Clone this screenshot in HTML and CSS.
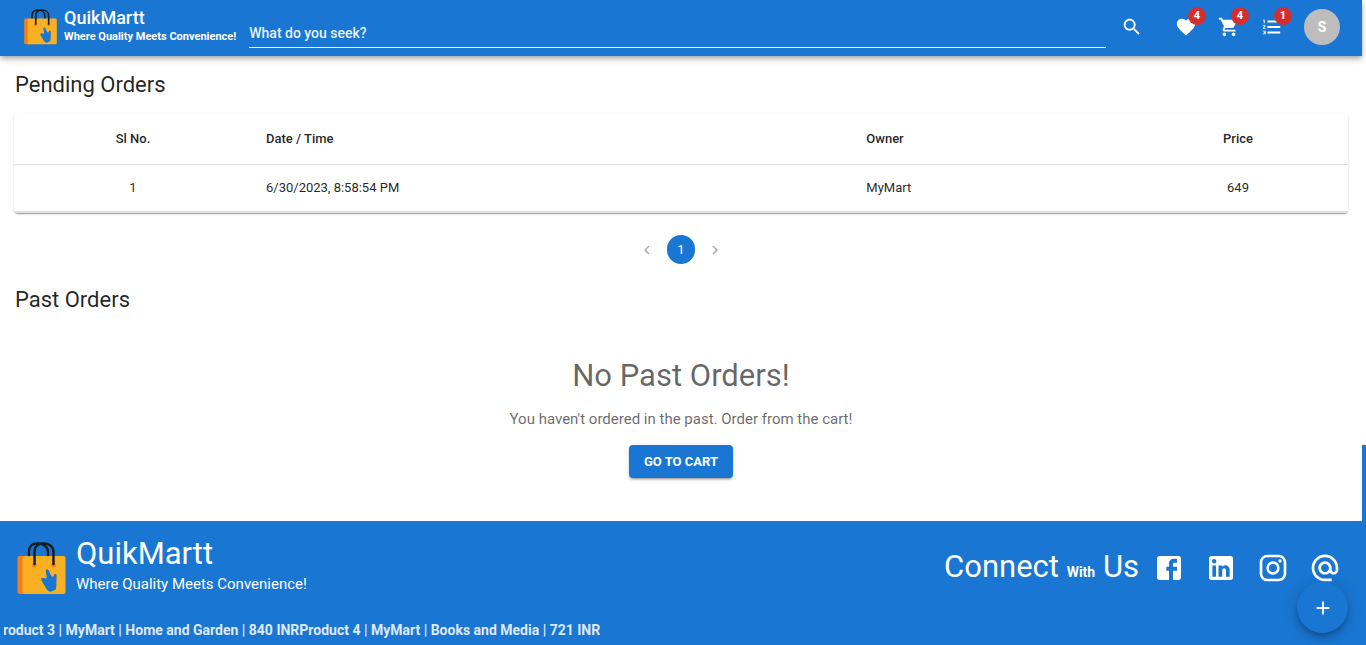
FILE: index.html
```html
<!DOCTYPE html>
<html lang="en">
<head>
<meta charset="utf-8">
<meta name="viewport" content="width=device-width, initial-scale=1">
<title>QuikMartt – Orders</title>
<link rel="stylesheet" href="styles.css">
</head>
<body>
<svg class="defs" aria-hidden="true">
  <symbol id="bag" viewBox="0 0 48 53">
    <path fill="#f57f17" d="M2 14h8v38H2a2 2 0 0 1-2-2V16a2 2 0 0 1 2-2z"/>
    <path fill="#f9b023" d="M7 14h39a2 2 0 0 1 2 2v34a2 2 0 0 1-2 2H7c-1 0-2-1-2-2V17c0-2 1-3 2-3z"/>
    <circle cx="17" cy="23" r="2.400" fill="#f57f17"/><circle cx="36" cy="23" r="2.400" fill="#f57f17"/>
    <path fill="none" stroke="#151c22" stroke-width="2.400" stroke-linecap="round" d="M11.500 13V10C11.500 4 15 1.400 20 1.400S30.500 4 30.500 10v3M17 22V10C17 4 21 1.400 26 1.400S36 4 36 10v12"/>
    <path fill="#1976d2" d="M28.200 28.500c.2-1.500 2-1.800 2.700-.6l3.200 6.600 1.500.2 1.200-2.300c.8-.9 2.300-.4 2.300.8l-.2 9.800c.1 2-.4 3-.7 4.500l-4.600 2.300c-2-.3-3.200-1.200-4.300-2.400l-5-8.300c-1.200-1.800-.6-3.600 1.400-3.200l2.600.6 1-.8z"/>
  </symbol>
</svg>

<div class="page">
  <header class="topbar">
    <a class="brand" href="#">
      <svg class="brand-logo" aria-hidden="true"><use href="#bag"/></svg>
      <span class="brand-text">
        <span class="brand-name">QuikMartt</span>
        <span class="brand-tag">Where Quality Meets Convenience!</span>
      </span>
    </a>
    <form class="search">
      <input class="search-input" type="text" placeholder="What do you seek?" aria-label="What do you seek?">
      <button class="icon-btn" type="button" aria-label="Search">
        <svg class="icon" viewBox="0 0 24 24"><path d="M15.500 14h-.79l-.28-.27C15.410 12.590 16 11.110 16 9.500 16 5.910 13.090 3 9.500 3S3 5.910 3 9.500 5.910 16 9.500 16c1.610 0 3.090-.59 4.230-1.570l.27.28v.79l5 4.990L20.490 19l-4.990-5zm-6 0C7.010 14 5 11.990 5 9.500S7.010 5 9.500 5 14 7.010 14 9.500 11.990 14 9.500 14z"/></svg>
      </button>
    </form>
    <nav class="actions" aria-label="Account">
      <a class="icon-btn" href="#" aria-label="Wishlist, 4 items">
        <svg class="icon" viewBox="0 0 24 24"><path d="m12 21.350-1.450-1.320C5.400 15.360 2 12.280 2 8.500 2 5.420 4.420 3 7.500 3c1.740 0 3.410.81 4.500 2.090C13.090 3.810 14.760 3 16.500 3 19.580 3 22 5.420 22 8.500c0 3.780-3.400 6.860-8.550 11.540L12 21.350z"/></svg>
        <span class="badge">4</span>
      </a>
      <a class="icon-btn" href="#" aria-label="Cart, 4 items">
        <svg class="icon" viewBox="0 0 24 24"><path d="M7 18c-1.100 0-1.990.9-1.990 2S5.900 22 7 22s2-.9 2-2-.9-2-2-2zM1 2v2h2l3.600 7.590-1.350 2.450c-.16.28-.25.61-.25.960 0 1.100.9 2 2 2h12v-2H7.420c-.14 0-.25-.11-.25-.25l.03-.12.900-1.630h7.450c.75 0 1.410-.41 1.750-1.030l3.580-6.490c.08-.14.120-.31.120-.48 0-.55-.45-1-1-1H5.210l-.94-2H1zm16 16c-1.100 0-1.990.9-1.990 2s.89 2 1.990 2 2-.9 2-2-.9-2-2-2z"/></svg>
        <span class="badge">4</span>
      </a>
      <a class="icon-btn" href="#" aria-label="Orders, 1 item">
        <svg class="icon" viewBox="0 0 24 24"><path d="M2 17h2v.5H3v1h1v.5H2v1h3v-4H2v1zm1-9h1V4H2v1h1v3zm-1 3h1.800L2 13.100v.9h3v-1H3.200L5 10.900V10H2v1zm5-6v2h14V5H7zm0 14h14v-2H7v2zm0-6h14v-2H7v2z"/></svg>
        <span class="badge">1</span>
      </a>
    </nav>
    <button class="avatar" type="button" aria-label="Account menu">S</button>
  </header>

  <main class="content">
    <h1 class="section-title">Pending Orders</h1>
    <div class="table-card">
      <table class="orders">
        <thead>
          <tr><th class="col-no" scope="col">Sl No.</th><th class="col-date" scope="col">Date / Time</th><th class="col-owner" scope="col">Owner</th><th class="col-price" scope="col">Price</th></tr>
        </thead>
        <tbody>
          <tr><td class="col-no">1</td><td class="col-date">6/30/2023, 8:58:54 PM</td><td class="col-owner">MyMart</td><td class="col-price">649</td></tr>
        </tbody>
      </table>
    </div>
    <nav class="pager" aria-label="Pagination">
      <button class="page-btn" type="button" disabled aria-label="Previous page"><svg class="chevron" viewBox="0 0 24 24"><path d="M15.410 7.410 14 6l-6 6 6 6 1.410-1.410L10.830 12z"/></svg></button>
      <button class="page-btn page-current" type="button" aria-current="page">1</button>
      <button class="page-btn" type="button" disabled aria-label="Next page"><svg class="chevron" viewBox="0 0 24 24"><path d="M10 6 8.590 7.410 13.170 12l-4.580 4.590L10 18l6-6z"/></svg></button>
    </nav>
    <h2 class="section-title">Past Orders</h2>
    <section class="empty">
      <h3 class="empty-title">No Past Orders!</h3>
      <p class="empty-text">You haven't ordered in the past. Order from the cart!</p>
      <button class="cart-btn" type="button">GO TO CART</button>
    </section>
  </main>

  <footer class="footer">
    <div class="footer-row">
      <a class="footer-brand" href="#">
        <svg class="footer-logo" aria-hidden="true"><use href="#bag"/></svg>
        <span class="footer-text">
          <span class="footer-name">QuikMartt</span>
          <span class="footer-tag">Where Quality Meets Convenience!</span>
        </span>
      </a>
      <div class="connect">
        <p class="connect-text">Connect <span class="connect-small">With</span> Us</p>
        <nav class="social" aria-label="Social">
          <a class="social-link" href="#" aria-label="Facebook"><svg class="social-icon" viewBox="0 0 24 24"><path d="M5 3h14a2 2 0 0 1 2 2v14a2 2 0 0 1-2 2H5a2 2 0 0 1-2-2V5a2 2 0 0 1 2-2m13 2h-2.500A3.500 3.500 0 0 0 12 8.500V11h-2v3h2v7h3v-7h3v-3h-3V9a1 1 0 0 1 1-1h2V5z"/></svg></a>
          <a class="social-link" href="#" aria-label="LinkedIn"><svg class="social-icon" viewBox="0 0 24 24"><path d="M19 3a2 2 0 0 1 2 2v14a2 2 0 0 1-2 2H5a2 2 0 0 1-2-2V5a2 2 0 0 1 2-2h14m-.5 15.500v-5.300a3.260 3.260 0 0 0-3.260-3.260c-.85 0-1.840.52-2.320 1.300v-1.110h-2.790v8.370h2.790v-4.930c0-.77.62-1.400 1.390-1.400a1.400 1.400 0 0 1 1.400 1.400v4.930h2.790M6.880 8.560a1.680 1.680 0 0 0 1.680-1.680c0-.93-.75-1.690-1.680-1.690a1.690 1.690 0 0 0-1.690 1.690c0 .93.76 1.680 1.690 1.680m1.390 9.940v-8.370H5.500v8.370h2.770z"/></svg></a>
          <a class="social-link" href="#" aria-label="Instagram"><svg class="social-icon" viewBox="0 0 24 24"><path d="M7.800 2h8.400C19.400 2 22 4.600 22 7.800v8.400a5.800 5.800 0 0 1-5.800 5.800H7.800C4.600 22 2 19.400 2 16.200V7.800A5.800 5.800 0 0 1 7.800 2m-.2 2A3.600 3.600 0 0 0 4 7.600v8.800C4 18.390 5.610 20 7.600 20h8.800a3.600 3.600 0 0 0 3.600-3.600V7.600C20 5.610 18.390 4 16.400 4H7.600m9.650 1.500a1.250 1.250 0 0 1 1.250 1.250A1.250 1.250 0 0 1 17.250 8 1.250 1.250 0 0 1 16 6.750a1.250 1.250 0 0 1 1.250-1.250M12 7a5 5 0 0 1 5 5 5 5 0 0 1-5 5 5 5 0 0 1-5-5 5 5 0 0 1 5-5m0 2a3 3 0 0 0-3 3 3 3 0 0 0 3 3 3 3 0 0 0 3-3 3 3 0 0 0-3-3z"/></svg></a>
          <a class="social-link" href="#" aria-label="Email"><svg class="social-icon" viewBox="0 0 24 24"><path d="M12 1.950c-5.520 0-10 4.480-10 10s4.480 10 10 10h5v-2h-5c-4.340 0-8-3.660-8-8s3.660-8 8-8 8 3.660 8 8v1.430c0 .79-.71 1.570-1.500 1.570s-1.500-.78-1.500-1.570v-1.430c0-2.760-2.240-5-5-5s-5 2.240-5 5 2.240 5 5 5c1.380 0 2.640-.56 3.540-1.470.65.89 1.770 1.470 2.960 1.470 1.970 0 3.500-1.600 3.500-3.570v-1.430c0-5.520-4.480-10-10-10zm0 13c-1.660 0-3-1.340-3-3s1.340-3 3-3 3 1.340 3 3-1.340 3-3 3z"/></svg></a>
        </nav>
      </div>
    </div>
    <div class="ticker"><p class="ticker-text">Product 3 | MyMart | Home and Garden | 840 INRProduct 4 | MyMart | Books and Media | 721 INR</p></div>
  </footer>
</div>

<button class="fab" type="button" aria-label="Add"><svg class="fab-icon" viewBox="0 0 24 24"><path d="M19 13h-6v6h-2v-6H5v-2h6V5h2v6h6v2z"/></svg></button>
<div class="scroll-thumb" aria-hidden="true"></div>
</body>
</html>
```

FILE: styles.css
```css
:root {
  --blue: #1976d2;
  --gutter: 14px;
  --track: 4px;
}

*, *::before, *::after { box-sizing: border-box; }

body {
  margin: 0;
  background: #fff;
  color: rgba(0, 0, 0, 0.87);
  font-family: Roboto, "Liberation Sans", sans-serif;
  font-size: 14px;
  line-height: 20px;
}

h1, h2, h3, p { margin: 0; font-weight: 400; }
a { color: inherit; text-decoration: none; }
button {
  border: 0;
  padding: 0;
  background: none;
  color: inherit;
  font: inherit;
  cursor: pointer;
}
svg { display: block; fill: currentColor; }

.defs { position: absolute; width: 0; height: 0; }

.page {
  display: flex;
  flex-direction: column;
  min-height: 100vh;
  margin-right: var(--track);
}

/* Top bar */
.topbar {
  display: flex;
  align-items: center;
  height: 56px;
  padding: 0 22px 2px 24px;
  background: var(--blue);
  color: #fff;
  box-shadow: 0 2px 4px -1px rgba(0, 0, 0, 0.2), 0 4px 5px rgba(0, 0, 0, 0.14), 0 1px 10px rgba(0, 0, 0, 0.12);
}
.brand { display: flex; align-items: center; gap: 7px; margin-right: 13px; }
.brand-logo { width: 33px; height: 36px; }
.brand-text { display: flex; flex-direction: column; }
.brand-name { font-size: 18px; font-weight: 500; line-height: 20px; }
.brand-tag { font-size: 11px; font-weight: 700; line-height: 18px; }

.search { display: flex; flex: 1; align-items: center; gap: 8px; }
.search-input {
  flex: 1;
  min-width: 0;
  height: 30px;
  margin-top: 12px;
  padding: 0;
  border: 0;
  border-bottom: 1px solid #fff;
  border-radius: 0;
  outline: 0;
  background: transparent;
  color: #fff;
  font: 500 14px/20px Roboto, "Liberation Sans", sans-serif;
}
.search-input::placeholder { color: #fff; opacity: 0.9; }

.icon-btn { position: relative; display: block; padding: 7px; }
.icon { width: 22px; height: 22px; }
.actions { display: flex; gap: 7px; margin: 0 14px 0 18px; }
.badge {
  position: absolute;
  top: -2px;
  right: -2px;
  width: 18px;
  height: 18px;
  border-radius: 50%;
  background: #d32f2f;
  font-size: 11px;
  font-weight: 700;
  line-height: 18px;
  text-align: center;
}
.avatar {
  width: 36px;
  height: 36px;
  border-radius: 50%;
  background: #bdbdbd;
  font-size: 14px;
  font-weight: 700;
}

/* Orders */
.content { padding: 12px var(--gutter) 42px; }
.section-title { padding-left: 1px; font-size: 22px; line-height: 33px; }

.table-card {
  margin-top: 12px;
  border-radius: 4px;
  box-shadow: 0 2px 1px -1px rgba(0, 0, 0, 0.2), 0 1px 1px rgba(0, 0, 0, 0.14), 0 1px 3px rgba(0, 0, 0, 0.12);
}
.orders {
  width: 100%;
  border-bottom: 1px solid #e0e0e0;
  border-collapse: separate;
  border-spacing: 0;
  border-radius: 4px;
  table-layout: fixed;
  font-size: 13px;
}
.orders th, .orders td { border-bottom: 1px solid #e0e0e0; text-align: left; }
.orders th { padding: 16px 14px 15px; font-weight: 500; }
.orders td { padding: 13px 14px; }
.orders .col-no { width: 238px; text-align: center; }
.orders .col-date { width: 45%; }
.orders .col-price { width: 220px; text-align: center; }

.pager { display: flex; justify-content: center; gap: 6px; margin: 22px 0 19px; }
.page-btn {
  display: grid;
  place-items: center;
  width: 28px;
  height: 29px;
  border-radius: 14px;
  font-size: 13px;
}
.page-btn:disabled { opacity: 0.38; cursor: default; }
.page-current { background: var(--blue); color: #fff; }
.chevron { width: 18px; height: 18px; }

.empty { display: flex; flex-direction: column; align-items: center; padding-top: 41px; color: rgba(0, 0, 0, 0.6); }
.empty-title { font-size: 31px; line-height: 38px; }
.empty-text { margin: 14px 0 16px; font-size: 15px; line-height: 20px; }
.cart-btn {
  padding: 6px 15px;
  border-radius: 4px;
  background: var(--blue);
  color: #fff;
  font-size: 13px;
  font-weight: 700;
  line-height: 21px;
  box-shadow: 0 3px 1px -2px rgba(0, 0, 0, 0.2), 0 2px 2px rgba(0, 0, 0, 0.14), 0 1px 5px rgba(0, 0, 0, 0.12);
}

/* Footer */
.footer { margin: auto calc(-1 * var(--track)) 0 0; padding: 14px 4px 5px; background: var(--blue); color: #fff; }
.footer-row { display: flex; align-items: center; justify-content: space-between; padding: 0 21px 0 13px; }
.footer-brand { display: flex; align-items: center; gap: 10px; }
.footer-logo { width: 49px; height: 53px; margin-top: 6px; }
.footer-text { display: flex; flex-direction: column; }
.footer-name { font-size: 31px; line-height: 38px; }
.footer-tag { font-size: 15px; font-weight: 400; line-height: 22px; }
.connect { display: flex; align-items: center; gap: 14px; padding-top: 6px; }
.connect-text { padding-top: 2px; font-size: 31px; line-height: 34px; }
.connect-small { font-size: 14px; font-weight: 700; }
.social { display: flex; gap: 20px; }
.social-icon { width: 32px; height: 32px; }
.ticker { overflow: hidden; margin-top: 25px; }
.ticker-text { margin-left: -10px; font-weight: 700; white-space: nowrap; opacity: 0.85; }

/* Overlays */
.fab {
  position: fixed;
  right: 18px;
  bottom: 12px;
  display: grid;
  place-items: center;
  width: 51px;
  height: 51px;
  border-radius: 50%;
  background: var(--blue);
  color: #fff;
  box-shadow: 0 3px 5px -1px rgba(0, 0, 0, 0.2), 0 6px 10px rgba(0, 0, 0, 0.14), 0 1px 18px rgba(0, 0, 0, 0.12);
}
.fab-icon { width: 22px; height: 22px; }
.scroll-thumb { position: fixed; right: 0; bottom: 0; width: var(--track); height: 31vh; background: var(--blue); }
```
